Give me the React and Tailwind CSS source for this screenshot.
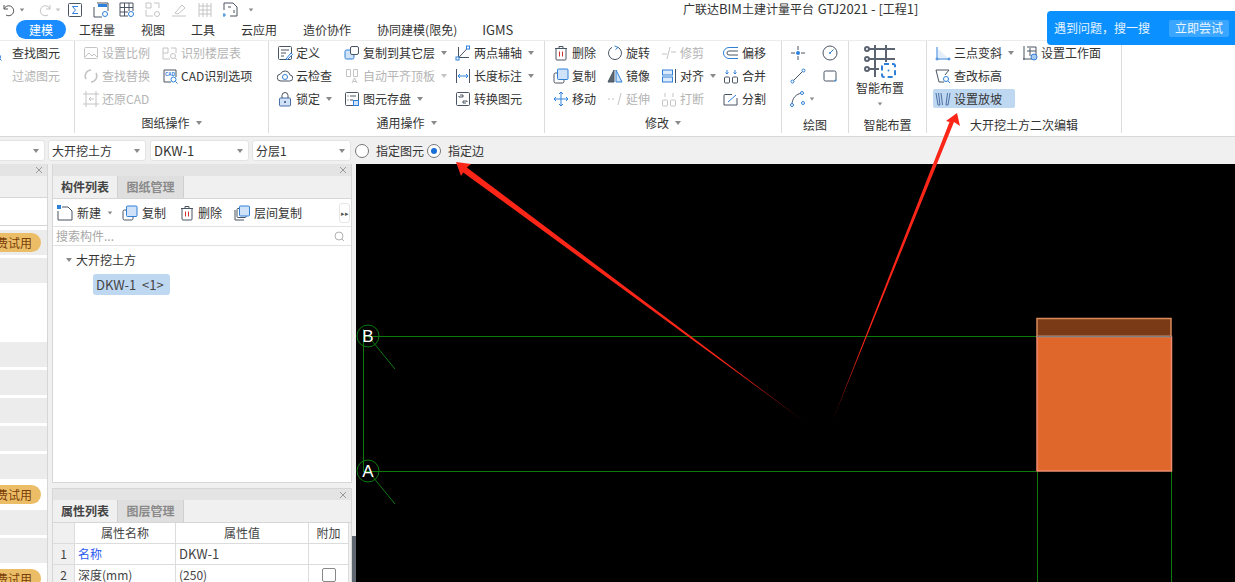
const font = { fontFamily: '"Noto Sans CJK SC", "Liberation Sans", sans-serif' };

const Svg = ({ children, w = 16, h = 16, className = '' }) => (
  <svg width={w} height={h} viewBox={`0 0 ${w} ${h}`} fill="none" stroke="#4a5563" strokeWidth="1" className={`shrink-0 ${className}`}>
    {children}
  </svg>
);

const BLUE = '#2f80d8';
const GREY = '#c4c4c4';

const icons = {
  find: <Svg><rect x="-6" y="2.5" width="12" height="10" stroke={GREY} /><circle cx="5" cy="12" r="2.5" stroke={BLUE} /><path d="M7 14l1.5 1.5" stroke={BLUE} /></Svg>,
  filter: <Svg><path d="M-4 3h11l-4 5v6l-3-2V8z" stroke={GREY} /></Svg>,
  scale: <Svg><rect x="1.5" y="2.5" width="13" height="11" rx="1" stroke={GREY} /><path d="M2 12l4-4 3 3 2-2 3 3" stroke={GREY} /></Svg>,
  floor: <Svg><path d="M1 3h5v5H1zM9 3h5v5M1 8v6h7" stroke={GREY} /><circle cx="11" cy="11" r="2.5" stroke={GREY} /><path d="M13 13l2 2" stroke={GREY} /></Svg>,
  replace: <Svg><path d="M8 2a6 6 0 0 0-5 9M8 14a6 6 0 0 0 5-9" stroke={GREY} strokeWidth="1.5" /></Svg>,
  cad: <Svg><path d="M9 14H2V2h12v7" stroke="#4a5563" /><text x="3" y="8" fontSize="5" fill={BLUE} stroke="none" fontWeight="700">CAD</text><circle cx="11.5" cy="11.5" r="2.5" stroke={BLUE} /><path d="M13.5 13.5l2 2" stroke={BLUE} /></Svg>,
  restore: <Svg><path d="M3 0v16M13 0v16M0 3h16M0 13h16" stroke={GREY} /><path d="M11 8H6l2-2M6 8l2 2" stroke={GREY} /></Svg>,
  define: <Svg><rect x="1.5" y="1.5" width="13" height="13" rx="1" /><path d="M4 5h8M4 8h5M4 11h3" /><path d="M9 14l5-6 1.5 1.5L10 15z" stroke={BLUE} fill="#fff" /></Svg>,
  cloud: <Svg><path d="M4 13a3.5 3.5 0 0 1-.5-7 5 5 0 0 1 9.5 1A3 3 0 0 1 12.5 13z" /><circle cx="8" cy="9" r="2.5" stroke={BLUE} /></Svg>,
  lock: <Svg><rect x="2.5" y="7" width="11" height="8" rx="1" fill="#cfe2f8" stroke="#4a6fa5" /><path d="M5 7V4.5a3 3 0 0 1 6 0V7" /><circle cx="8" cy="11" r="1" fill="#2b4e80" stroke="none" /></Svg>,
  copyTo: <Svg><rect x="1" y="5" width="9" height="9" rx="1.5" fill="#cfe2f8" stroke={BLUE} /><rect x="6.5" y="1.5" width="8" height="8" rx="1.5" fill="#fff" /></Svg>,
  align: <Svg><path d="M2.5 1.5h4v7h-4zM9.5 1.5h4v7h-4zM8 15l2.5-5 2.5 5M9 13.5h3" stroke={GREY} /></Svg>,
  save: <Svg><rect x="1.5" y="1.5" width="13" height="13" rx="1" /><path d="M3.5 5h1M6 5h6M3.5 9h1M6 9h3" /><rect x="9.5" y="9.5" width="5" height="5" fill="#cfe2f8" stroke={BLUE} /></Svg>,
  twoPoint: <Svg><path d="M3.5 2v12M1 12.5h13M14 1.5L1.5 15" /><rect x="11.5" y="1" width="3" height="3" stroke={BLUE} fill="#fff" /><rect x="1" y="12" width="3" height="3" stroke={BLUE} fill="#fff" /></Svg>,
  length: <Svg><path d="M1.5 1v14M14.5 1v14" /><path d="M3 8h10M5 6L3 8l2 2M11 6l2 2-2 2" stroke={BLUE} /></Svg>,
  convert: <Svg><rect x="1.5" y="1.5" width="13" height="13" rx="1" /><path d="M5 4h3v2H4V5M11 12H8v-2h4v1" stroke="#4a5563" /></Svg>,
  trash: <Svg><path d="M2 3.5h12M3 3.5V14a1 1 0 0 0 1 1h8a1 1 0 0 0 1-1V3.5M6 3.5V1.5h4v2" /><path d="M6.5 6.5v5M9.5 6.5v5" stroke="#d03030" /></Svg>,
  rotate: <Svg><path d="M11 2.3A6.5 6.5 0 1 1 5 2.3" /><path d="M7.5 1L11 2.3 8.5 4.5" stroke={BLUE} /></Svg>,
  trim: <Svg><path d="M1 9h5M10 7h5" stroke={GREY} /><path d="M9 2L6 14" stroke={GREY} /></Svg>,
  offset: <Svg><path d="M15 2.5H6a5.5 5.5 0 0 0 0 11h9" stroke={BLUE} /><path d="M15 6H6a2 2 0 0 0 0 4h9" /></Svg>,
  copy: <Svg><rect x="1" y="5" width="10" height="10" rx="1.5" fill="#fff" /><rect x="4.5" y="1" width="10.5" height="10.5" rx="1" fill="#cfe2f8" stroke={BLUE} /></Svg>,
  mirror: <Svg><path d="M7 2L1 14h6z" fill="#5c6673" stroke="#4a5563" /><path d="M9 2l6 12H9z" fill="#cfe2f8" stroke={BLUE} /></Svg>,
  alignH: <Svg><path d="M14.5 1v14" /><rect x="1.5" y="2" width="10" height="5" stroke={BLUE} fill="#dceafa" /><rect x="1.5" y="9" width="10" height="5" stroke={BLUE} fill="#dceafa" /></Svg>,
  merge: <Svg><rect x="1.5" y="9" width="5" height="6" rx="1" /><rect x="9.5" y="9" width="5" height="6" rx="1" /><path d="M4 2v4M2.5 4.5L4 6l1.5-1.5M12 2v4M10.5 4.5L12 6l1.5-1.5" stroke={BLUE} /></Svg>,
  move: <Svg><path d="M8 1v14M1 8h14M6 3l2-2 2 2M6 13l2 2 2-2M3 6L1 8l2 2M13 6l2 2-2 2" stroke={BLUE} /></Svg>,
  extend: <Svg><path d="M1 8h2M5 8h2" stroke={GREY} /><path d="M14 2l-3 12" stroke={GREY} /></Svg>,
  breakIcon: <Svg><rect x="1.5" y="9" width="5" height="6" rx="1" stroke={GREY} /><rect x="9.5" y="9" width="5" height="6" rx="1" stroke={GREY} /><path d="M4 2v4M12 2v4" stroke={GREY} /></Svg>,
  split: <Svg><path d="M9 3.5H2a1 1 0 0 0-1 1V14h13V7" /><path d="M5 11l8-7" stroke={BLUE} /></Svg>,
  point: <Svg><circle cx="8" cy="8" r="2" fill={BLUE} stroke="none" /><path d="M8 1v4M8 11v4M1 8h4M11 8h4" /></Svg>,
  circle: <Svg><circle cx="8" cy="8" r="7" /><path d="M8 8l3.5-3.5" stroke={BLUE} /><circle cx="8" cy="8" r="1" fill={BLUE} stroke="none" /></Svg>,
  line: <Svg><path d="M2.5 13.5l11-11" /><circle cx="2.5" cy="13.5" r="1.5" fill="#fff" stroke={BLUE} /><circle cx="13.5" cy="2.5" r="1.5" fill="#fff" stroke={BLUE} /></Svg>,
  rect: <Svg><rect x="2" y="3" width="12" height="10" rx="1.5" /><circle cx="13.5" cy="12.5" r="1" fill={BLUE} stroke="none" /></Svg>,
  arc: <Svg><path d="M2 14C2 7 6 3 12 2" /><circle cx="2" cy="14" r="1.5" fill="#fff" stroke={BLUE} /><circle cx="12" cy="2" r="1.5" fill="#fff" stroke={BLUE} /><circle cx="13" cy="12" r="1.5" fill="#fff" stroke={BLUE} /></Svg>,
  threePoint: <Svg><path d="M2 2v12h13" stroke={BLUE} /><path d="M3 13V4l10 9z" fill="#e3eefa" stroke="none" /><circle cx="2" cy="14" r="1" fill="#fff" stroke={BLUE} /><circle cx="14" cy="14" r="1" fill="#fff" stroke={BLUE} /></Svg>,
  workplane: <Svg><path d="M2 1v14M1 14h9M5 2h9v8M8 3v8M5 6h9" /><circle cx="12" cy="12" r="3" fill="#a8c9ee" stroke={BLUE} /></Svg>,
  elevation: <Svg><path d="M1 2h13l-4 5M1 2l3 12h5" /><circle cx="11" cy="11" r="2.5" stroke={BLUE} /><path d="M13 13l2 2" stroke={BLUE} /></Svg>,
  slope: <Svg><path d="M1 2l2 12h2L3.5 2M6 2l1.5 12M15 2l-2 12h-2L12.5 2" stroke="#4a6fa5" /></Svg>,
  newDoc: <Svg><path d="M5 2h6l4 4v9H1V6" /><rect x="0" y="0" width="4" height="4" fill={BLUE} stroke="none" /></Svg>,
  copyFloor: <Svg><path d="M1 5v10h9" /><rect x="3" y="3.5" width="9" height="9" rx="1" fill="#fff" /><rect x="5.5" y="1" width="10" height="10" rx="1" fill="#cfe2f8" stroke={BLUE} /></Svg>,
};

const Caret = ({ className = '' }) => (
  <span className={`inline-block w-0 h-0 border-x-[3.5px] border-x-transparent border-t-[4px] border-t-[#8a8a8a] ${className}`} />
);

const RibbonItem = ({ icon, label, muted, caret, active, className = '' }) => (
  <div className={`flex items-center h-[23px] whitespace-nowrap ${className}`}>
    <div className={`flex items-center h-[19px] rounded-[2px] ${active ? 'bg-[#bfd8f2] pr-[13px] pl-[2px]' : ''}`}>
      {icons[icon]}
      <span className={`ml-[3px] text-[12px] ${muted ? 'text-[#b4b4b4]' : 'text-[#333]'}`}>{label}</span>
    </div>
    {caret && <Caret className={`ml-[6px] ${muted ? 'opacity-50' : ''}`} />}
  </div>
);

const Col = ({ w, items }) => (
  <div className="flex flex-col shrink-0" style={{ width: w }}>
    {items.map((it, i) => <RibbonItem key={i} {...it} />)}
  </div>
);

const Group = ({ w, label, caret, pl, children }) => (
  <div className="flex flex-col shrink-0 h-[92px] border-r border-[#dcdcdc]" style={{ width: w }}>
    <div className="flex h-[71px]" style={{ paddingLeft: pl }}>{children}</div>
    <div className={`flex items-center justify-center gap-[6px] text-[12px] text-[#333] h-[21px] ${caret ? '' : 'pt-[4px]'}`}>
      {label}
      {caret && <Caret />}
    </div>
  </div>
);

const tabs = [
  ['置', 'ml-[-12px] w-[16px]'],
  ['建模', ''],
  ['工程量', 'ml-[13px]'],
  ['视图', 'ml-[26px]'],
  ['工具', 'ml-[26px]'],
  ['云应用', 'ml-[26px]'],
  ['造价协作', 'ml-[26px]'],
  ['协同建模(限免)', 'ml-[26px]'],
  ['IGMS', 'ml-[25px] text-[13px]'],
];

const Select = ({ w, label, className = '' }) => (
  <div className={`flex items-center justify-between h-[21px] bg-white rounded-[3px] border border-[#e4e4e4] pl-[3px] pr-[5px] text-[12px] text-[#333] shrink-0 ${className}`} style={{ width: w }}>
    <span>{label}</span>
    <Caret />
  </div>
);

const PanelHeader = ({ h = 12 }) => (
  <div className="flex justify-end items-center bg-[#e4e4e4] pr-[4px] shrink-0" style={{ height: h }}>
    <svg width="8" height="8" viewBox="0 0 8 8" stroke="#9a9a9a"><path d="M1 1l6 6M7 1L1 7" /></svg>
  </div>
);

const PanelTabs = ({ first, second }) => (
  <div className="flex h-[23px] shrink-0 bg-[#f0f0f0] border-b border-[#d6d6d6] text-[12px]">
    <div className="w-[65px] flex items-center justify-center font-bold text-[#444] border-r border-[#d0d0d0]">{first}</div>
    <div className="w-[66px] flex items-center justify-center font-bold text-[#8a8a8a] bg-[#dfdfdf] border-r border-[#d0d0d0]">{second}</div>
  </div>
);

const Badge = () => (
  <div className="h-[19px] w-[41px] rounded-r-full bg-[#ecbd67] text-[12px] text-[#7a3e08] flex items-center justify-end pr-[9px] overflow-hidden whitespace-nowrap">费试用</div>
);

// 每行 25px 高、间隔 3px
const leftRows = [
  { badge: true, grey: true }, { grey: true }, {}, {},
  { grey: true }, { grey: true }, { grey: true }, { grey: true }, { grey: true },
  { badge: true }, { grey: true }, { grey: true }, { badge: true },
];

const LeftPanel = () => (
  <div className="w-[48px] shrink-0 flex flex-col border-r border-[#d6d6d6] bg-white overflow-hidden">
    <PanelHeader />
    <div className="h-[22px] shrink-0 border-b border-[#d6d6d6] bg-[#f0f0f0]" />
    <div className="h-[28px] shrink-0 border-b border-[#d6d6d6]" />
    <div className="flex flex-col gap-[3px] mt-[4px]">
      {leftRows.map((r, i) => (
        <div key={i} className={`flex items-center h-[25px] shrink-0 ${r.grey ? 'bg-[#ececec]' : ''}`}>
          {r.badge && <Badge />}
        </div>
      ))}
    </div>
  </div>
);

const Cell = ({ w, className = '', children }) => (
  <div className={`h-[21px] flex items-center border-r border-b border-[#dcdcdc] shrink-0 text-[12px] ${className}`} style={{ width: w }}>{children}</div>
);

const MiddlePanel = () => (
  <div className="w-[300px] shrink-0 flex flex-col ml-[4px] overflow-hidden">
    <div className="h-[319px] shrink-0 flex flex-col bg-white border border-[#d6d6d6] border-t-0">
      <PanelHeader />
      <PanelTabs first="构件列表" second="图纸管理" />
      <div className="flex items-center h-[28px] border-b border-[#e2e2e2] pl-[4px] text-[12px] text-[#333]">
        {icons.newDoc}
        <span className="ml-[4px]">新建</span>
        <Caret className="ml-[6px] scale-75" />
        <span className="ml-[9px] flex items-center">{icons.copy}<span className="ml-[4px]">复制</span></span>
        <span className="ml-[13px] flex items-center">{icons.trash}<span className="ml-[3px]">删除</span></span>
        <span className="ml-[12px] flex items-center">{icons.copyFloor}<span className="ml-[4px]">层间复制</span></span>
        <span className="ml-auto mr-[1px] w-[11px] h-[20px] border border-[#e6e6e6] rounded-[3px] text-[7px] leading-[18px] text-center text-[#555]">▸▸</span>
      </div>
      <div className="flex items-center justify-between h-[19px] border-b border-[#e2e2e2] px-[3px] text-[12px] text-[#a8a8a8]">
        <span>搜索构件...</span>
        <svg width="11" height="11" viewBox="0 0 11 11" fill="none" stroke="#b0b0b0" className="mr-[3px]"><circle cx="5" cy="5" r="4" /><path d="M8 8l2 2" /></svg>
      </div>
      <div className="flex items-center mt-[5px] pl-[13px] h-[18px] text-[12px] text-[#333]">
        <Caret className="mr-[4px]" />
        大开挖土方
      </div>
      <div className="mt-[5px] ml-[40px] w-[77px] h-[21px] rounded-[3px] bg-[#bfd8f2] flex items-center pl-[3px] text-[13px] text-[#444] whitespace-pre">DKW-1  {'<1>'}</div>
    </div>
    <div className="mt-[5px] flex-1 flex flex-col bg-[#f0f0f0] border-x border-t border-[#d6d6d6]">
      <PanelHeader h={11} />
      <PanelTabs first="属性列表" second="图层管理" />
      <div className="flex text-[#444]">
        <Cell w={22} className="bg-[#f0f0f0]" />
        <Cell w={101} className="bg-white justify-center">属性名称</Cell>
        <Cell w={133} className="bg-white justify-center">属性值</Cell>
        <Cell w={40} className="bg-white justify-center">附加</Cell>
      </div>
      <div className="flex text-[#444]">
        <Cell w={22} className="bg-[#f0f0f0] justify-center">1</Cell>
        <Cell w={101} className="bg-white pl-[3px] text-[#2a5bf0]">名称</Cell>
        <Cell w={133} className="bg-white pl-[3px]"><span className="text-[13px]">DKW-1</span></Cell>
        <Cell w={40} className="bg-white" />
      </div>
      <div className="flex text-[#444]">
        <Cell w={22} className="bg-[#f0f0f0] justify-center">2</Cell>
        <Cell w={101} className="bg-white pl-[3px]">深度(mm)</Cell>
        <Cell w={133} className="bg-white pl-[3px]">(250)</Cell>
        <Cell w={40} className="bg-white justify-center">
          <span className="w-[14px] h-[14px] rounded-[2px] border border-[#888]" />
        </Cell>
      </div>
    </div>
  </div>
);

const Canvas = () => (
  <svg className="block flex-1 h-full bg-black" viewBox="0 0 879 418" width="879" height="418">
    <g stroke="#0b7a0b" fill="none" strokeWidth="1">
      <path d="M7 172.5H680M7 307.5H680M7.5 165V308M681.5 307V418M815.5 307V418" />
      <path d="M12 172l27 33M12 307l27 33" />
      <circle cx="12" cy="172" r="11" />
      <circle cx="12" cy="307" r="11" />
    </g>
    <text x="12" y="178" textAnchor="middle" fontSize="17" fill="#fff" style={{ fontFamily: '"Liberation Sans", sans-serif' }}>B</text>
    <text x="12" y="313" textAnchor="middle" fontSize="17" fill="#fff" style={{ fontFamily: '"Liberation Sans", sans-serif' }}>A</text>
    <rect x="681" y="154.5" width="134" height="18" fill="#7b3a16" stroke="#d98a5a" strokeWidth="1.5" />
    <rect x="681" y="172.5" width="134.5" height="134.5" fill="#df672b" stroke="#ef8a70" strokeWidth="1.5" />
    <path d="M681 172.5h134.5" stroke="#7f7f7f" strokeWidth="1.5" />
  </svg>
);

const Arrows = () => (
  <svg className="absolute inset-0 pointer-events-none" width="1235" height="582" viewBox="0 0 1235 582">
    <defs>
      <linearGradient id="a1" gradientUnits="userSpaceOnUse" x1="805" y1="422" x2="456" y2="162">
        <stop offset="0" stopColor="#fb2618" stopOpacity="0.5" />
        <stop offset="0.25" stopColor="#fb2618" />
      </linearGradient>
      <linearGradient id="a2" gradientUnits="userSpaceOnUse" x1="832" y1="422" x2="957" y2="113">
        <stop offset="0" stopColor="#fb2618" stopOpacity="0.5" />
        <stop offset="0.25" stopColor="#fb2618" />
      </linearGradient>
    </defs>
    <path d="M456 162L471 164 466.8 167.6 805 422 463.2 172.4 461 176z" fill="url(#a1)" />
    <path d="M957 113L960 126 954 122 832 422 949.5 122 946 121z" fill="url(#a2)" />
  </svg>
);

export default function App() {
  return (
    <div className="relative w-[1235px] h-[582px] overflow-hidden bg-white flex flex-col text-[#333]" style={font}>
      <div className="flex items-center h-[19px] shrink-0 relative">
        <div className="flex items-center pl-[1px] gap-[2px]">
          <svg width="16" height="14" viewBox="0 0 16 14" fill="none" stroke="#555"><path d="M3 2v4h4M3 6a5 5 0 1 1 2 6" /></svg>
          <Caret className="scale-75" />
          <svg width="16" height="14" viewBox="0 0 16 14" fill="none" stroke={GREY} className="ml-[10px]"><path d="M13 2v4H9M13 6a5 5 0 1 0-2 6" /></svg>
          <Caret className="scale-75 opacity-50" />
          <svg width="16" height="16" viewBox="0 0 16 16" fill="none" stroke="#4a5563" className="ml-[4px]"><rect x="1.5" y="1.5" width="13" height="13" rx="1" /><path d="M11 4.5H5.5L8.5 8l-3 3.5H11" stroke={BLUE} /></svg>
          <svg width="16" height="16" viewBox="0 0 16 16" fill="none" stroke="#4a5563" className="ml-[8px]"><path d="M4 1h11v8M1 15V5M1 15h8" /><rect x="5" y="2" width="9" height="3" fill={BLUE} stroke="none" /><circle cx="12" cy="12" r="2.5" stroke={BLUE} /></svg>
          <svg width="16" height="16" viewBox="0 0 16 16" fill="none" stroke="#4a5563" className="ml-[8px]"><path d="M1 1h13v8M1 1v13h8M1 5.5h13M5.5 1v13M10 1v8M1 10h8" /><circle cx="12" cy="12" r="2.5" stroke={BLUE} /></svg>
          <svg width="16" height="16" viewBox="0 0 16 16" fill="none" stroke={GREY} className="ml-[8px]"><path d="M1 1h5v5H1zM9 1h5v5M1 8v6h7" /><circle cx="12" cy="12" r="2.5" /></svg>
          <svg width="16" height="16" viewBox="0 0 16 16" fill="none" stroke={GREY} className="ml-[8px]"><path d="M1 14h14M4 11l7-8 3 3-7 6z" /></svg>
          <svg width="16" height="16" viewBox="0 0 16 16" fill="none" stroke={GREY} className="ml-[8px]"><path d="M2 1v14M14 1v14M2 4h12M2 8h12M2 12h12M6 1v14M10 1v14" /></svg>
          <svg width="16" height="16" viewBox="0 0 16 16" fill="none" stroke="#4a5563" className="ml-[8px]"><path d="M1 8V1h9l4 4v9H7" /><path d="M1 11v4M-1 13h4" stroke={BLUE} /><path d="M5 5h3M11 8v3" /></svg>
          <Caret className="ml-[7px] scale-75" />
        </div>
        <div className="absolute left-[683px] top-0 text-[12px] leading-[18px] whitespace-nowrap text-[#333]">
          广联达<span className="text-[13px]">BIM</span>土建计量平台 <span className="text-[13px] ml-[1px]">GTJ2021 - [</span>工程<span className="text-[13px]">1]</span>
        </div>
      </div>

      <div className="flex items-center h-[21px] shrink-0 text-[12px] whitespace-nowrap">
        {tabs.map(([t, cls]) =>
          t === '建模' ? (
            <div key={t} className="ml-[12px] w-[50px] h-[19px] rounded-full bg-[#1a8cff] text-white flex items-center justify-center">{t}</div>
          ) : (
            <div key={t} className={cls}>{t}</div>
          )
        )}
      </div>

      <div className="flex h-[97px] shrink-0 border-b border-[#d8d8d8] border-t border-t-[#ececec]">
        <Group w={75} label="">
          <div className="-ml-[7px]">
            <Col w={70} items={[{ icon: 'find', label: '查找图元' }, { icon: 'filter', label: '过滤图元', muted: true }]} />
          </div>
        </Group>
        <Group w={194} label="图纸操作" caret pl={8}>
          <Col w={79} items={[{ icon: 'scale', label: '设置比例', muted: true }, { icon: 'replace', label: '查找替换', muted: true }, { icon: 'restore', label: '还原CAD', muted: true }]} />
          <Col w={100} items={[{ icon: 'floor', label: '识别楼层表', muted: true }, { icon: 'cad', label: 'CAD识别选项' }]} />
        </Group>
        <Group w={276} label="通用操作" caret pl={8}>
          <Col w={67} items={[{ icon: 'define', label: '定义' }, { icon: 'cloud', label: '云检查' }, { icon: 'lock', label: '锁定', caret: true }]} />
          <Col w={111} items={[{ icon: 'copyTo', label: '复制到其它层', caret: true }, { icon: 'align', label: '自动平齐顶板', muted: true, caret: true }, { icon: 'save', label: '图元存盘', caret: true }]} />
          <Col w={85} items={[{ icon: 'twoPoint', label: '两点辅轴', caret: true }, { icon: 'length', label: '长度标注', caret: true }, { icon: 'convert', label: '转换图元' }]} />
        </Group>
        <Group w={237} label="修改" caret pl={8}>
          <Col w={54} items={[{ icon: 'trash', label: '删除' }, { icon: 'copy', label: '复制' }, { icon: 'move', label: '移动' }]} />
          <Col w={54} items={[{ icon: 'rotate', label: '旋转' }, { icon: 'mirror', label: '镜像' }, { icon: 'extend', label: '延伸', muted: true }]} />
          <Col w={62} items={[{ icon: 'trim', label: '修剪', muted: true }, { icon: 'alignH', label: '对齐', caret: true }, { icon: 'breakIcon', label: '打断', muted: true }]} />
          <Col w={54} items={[{ icon: 'offset', label: '偏移' }, { icon: 'merge', label: '合并' }, { icon: 'split', label: '分割' }]} />
        </Group>
        <Group w={67} label="绘图" pl={8}>
          <div className="flex flex-col w-[32px]">
            <div className="h-[23px] flex items-center">{icons.point}</div>
            <div className="h-[23px] flex items-center">{icons.line}</div>
            <div className="h-[23px] flex items-center">{icons.arc}<Caret className="ml-[3px] scale-75" /></div>
          </div>
          <div className="flex flex-col">
            <div className="h-[23px] flex items-center">{icons.circle}</div>
            <div className="h-[23px] flex items-center">{icons.rect}</div>
          </div>
        </Group>
        <Group w={78} label="智能布置" pl={7}>
          <div className="w-[48px] flex flex-col items-center">
            <svg width="34" height="34" viewBox="0 0 34 34" fill="none" stroke="#5b6470" strokeWidth="2" className="mt-[3px]">
              <path d="M6 5h26M6 15h26M6 25h10M12 1v32M23 1v17" />
              <circle cx="4" cy="5" r="2" fill="#fff" />
              <circle cx="4" cy="15" r="2" fill="#fff" />
              <circle cx="4" cy="25" r="2" fill="#fff" />
              <rect x="19" y="20" width="13" height="13" rx="2" stroke={BLUE} strokeDasharray="5 3" fill="#fff" />
              <circle cx="25.5" cy="26.5" r="1" fill={BLUE} stroke="none" />
            </svg>
            <span className="text-[12px] mt-[1px] whitespace-nowrap">智能布置</span>
            <Caret className="mt-[5px] scale-75" />
          </div>
        </Group>
        <Group w={195} label="大开挖土方二次编辑" pl={8}>
          <div className="flex flex-col">
            <div className="flex items-center h-[23px]">
              <RibbonItem icon="threePoint" label="三点变斜" caret />
              <RibbonItem icon="workplane" label="设置工作面" className="ml-[8px]" />
            </div>
            <RibbonItem icon="elevation" label="查改标高" />
            <RibbonItem icon="slope" label="设置放坡" active className="-ml-[2px]" />
          </div>
        </Group>
      </div>

      <div className="flex items-center h-[27px] shrink-0 bg-[#f0f0f0]">
        <Select w={45} label="" className="rounded-l-none border-l-0" />
        <Select w={98} label="大开挖土方" className="ml-[3px]" />
        <Select w={99} label={<span className="text-[13px]">DKW-1</span>} className="ml-[4px]" />
        <Select w={99} label="分层1" className="ml-[3px]" />
        <span className="ml-[4px] w-[14px] h-[14px] rounded-full border border-[#777] bg-white" />
        <span className="ml-[7px] text-[12px]">指定图元</span>
        <span className="ml-[3px] w-[14px] h-[14px] rounded-full border border-[#777] bg-white flex items-center justify-center">
          <span className="w-[6px] h-[6px] rounded-full bg-[#1a6fd8]" />
        </span>
        <span className="ml-[7px] text-[12px]">指定边</span>
      </div>

      <div className="flex flex-1 min-h-0 bg-[#f0f0f0]">
        <LeftPanel />
        <MiddlePanel />
        <div className="w-[4px] shrink-0 flex flex-col justify-end">
          <div className="h-[46px] bg-[#5f6870]" />
        </div>
        <Canvas />
      </div>

      <div className="absolute left-[1047px] top-[11px] w-[188px] h-[34px] rounded-l-[4px] bg-[#0a90ff] flex items-center pl-[7px] text-[12px] text-white/90">
        遇到问题，搜一搜
        <span className="ml-[19px] w-[60px] h-[17px] rounded-[2px] bg-[#3ba6ff] flex items-center justify-center">立即尝试</span>
      </div>
      <Arrows />
    </div>
  );
}
